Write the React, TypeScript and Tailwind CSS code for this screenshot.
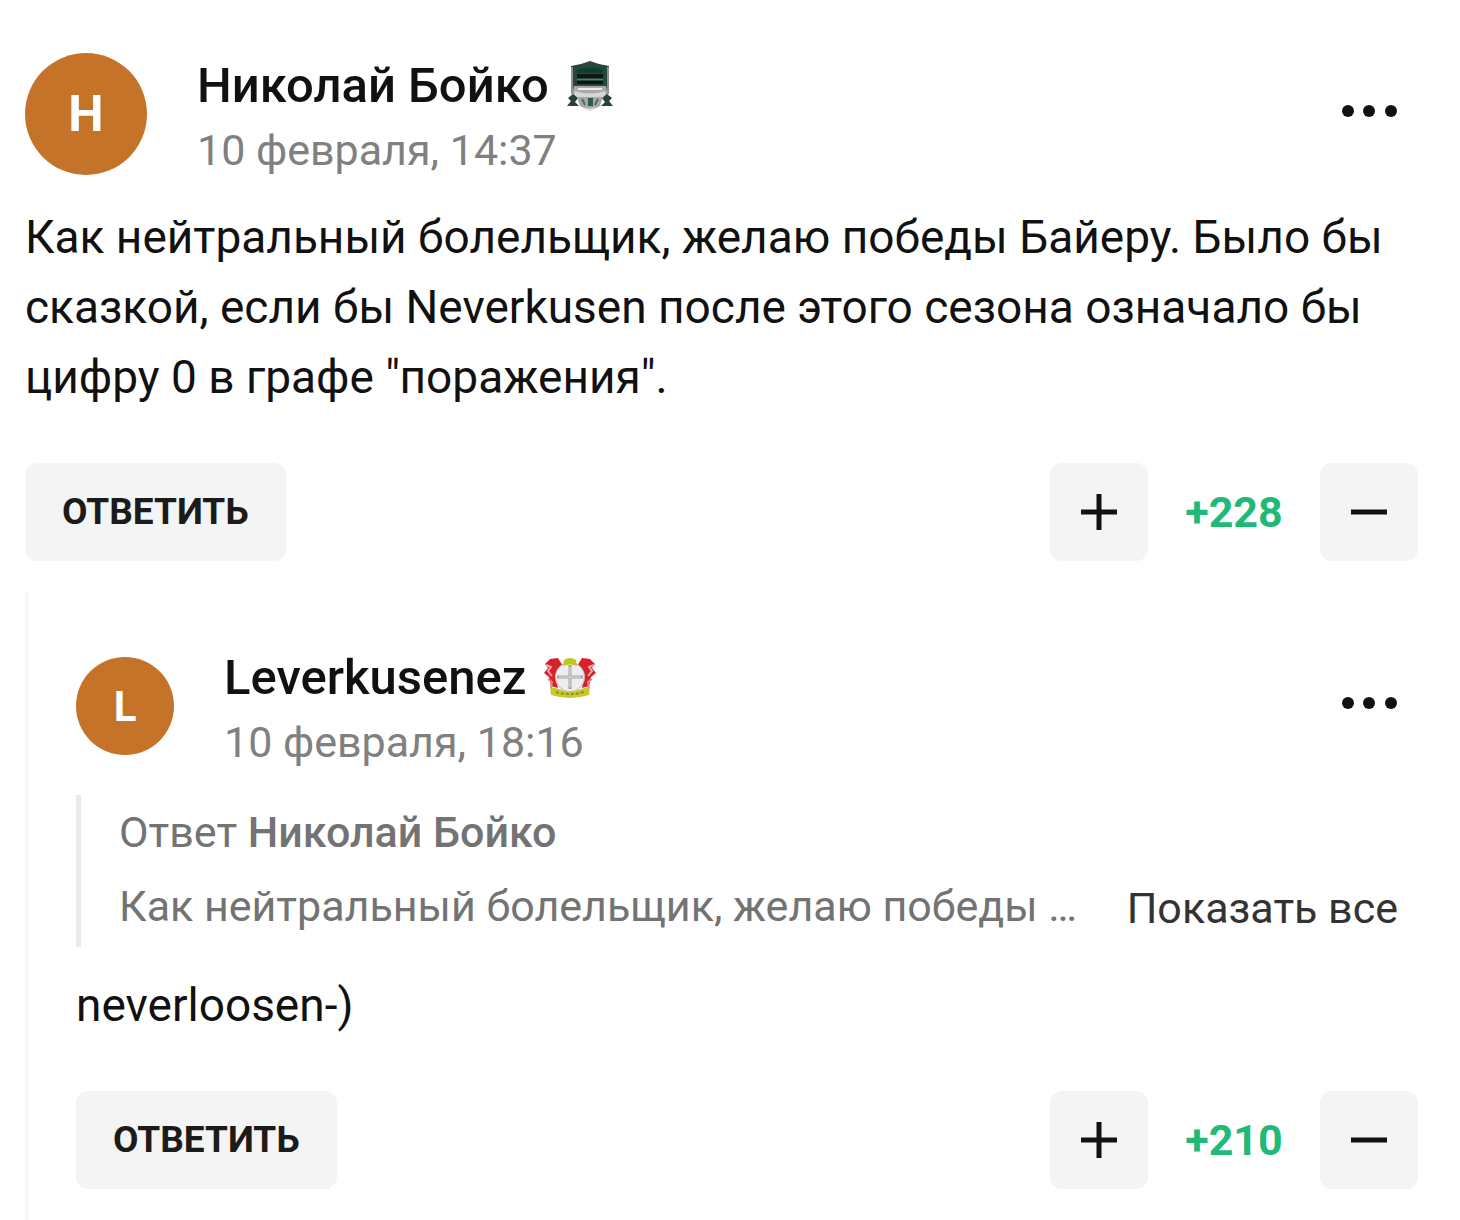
import { ReactNode } from 'react';

type Quote = {
  author: string;
  text: string;
};

type CommentData = {
  id: number;
  author: string;
  initial: string;
  badge: ReactNode;
  date: string;
  text: string;
  rating: number;
  quote?: Quote;
};

const KrasnodarBadge = () => (
  <svg viewBox="0 0 48 52" className="h-[52px] w-12" aria-hidden="true">
    <path d="M5 6Q14 5 24 1Q34 5 43 6L42 34H6Z" fill="#24483a" />
    <path d="M6 7V34M42 7V34" stroke="#8f8f8f" strokeWidth="2" />
    <path d="M11 10Q24 5 37 10V13H11Z" fill="#123d2c" />
    <path d="M11 14H37V18H11Z" fill="#101614" />
    <path d="M11 19H37V20H11Z" fill="#63756c" />
    <path d="M11 21H37V24H11Z" fill="#0d1210" />
    <path d="M8 26H40L42 35L35 40H13L6 35Z" fill="#a9a9a9" />
    <path d="M12 28H36V30H12Z" fill="#ededed" />
    <path d="M9 31Q24 36 39 31L40 36L24 43L8 36Z" fill="#d6d6d6" />
    <path d="M7 34L12 38L9 42L13 46H1L5 41L2 38Z" fill="#294238" />
    <path d="M41 34L36 38L39 42L35 46H47L43 41L46 38Z" fill="#294238" />
    <path d="M11 37H37L34 46L24 51L14 46Z" fill="#a4aaa7" />
    <path d="M22 38H27V46H22Z" fill="#31594b" />
    <path d="M16 39L19 45M32 39L29 45" stroke="#5c6863" strokeWidth="2" />
    <path d="M18 47L24 49L30 47L24 51Z" fill="#eeeeee" />
  </svg>
);

const BayerBadge = () => (
  <svg viewBox="0 0 54 42" className="h-[42px] w-[54px]" aria-hidden="true">
    <path d="M7 2L15 1L20 9L12 18L15 31L8 29L6 20L1 16L5 11L2 7Z" fill="#d9202b" />
    <path d="M47 2L39 1L34 9L42 18L39 31L46 29L48 20L53 16L49 11L52 7Z" fill="#d9202b" />
    <path d="M3 8L8 10L5 14L9 19M51 8L46 10L49 14L45 19" stroke="#e9aaa9" strokeWidth="2" fill="none" />
    <path d="M5 22L9 25L8 31M49 22L45 25L46 31" stroke="#dd8887" strokeWidth="2" fill="none" />
    <circle cx="27" cy="20" r="15" fill="#b9b9b9" />
    <circle cx="27" cy="20" r="14" fill="#eeeeee" />
    <path d="M27 8V32M14 20H40" stroke="#a4a4a4" strokeWidth="3" />
    <path d="M27 10V30M16 20H38" stroke="#e2e2e2" strokeWidth="1" />
    <path d="M21 3Q27 -1 33 3L34 9Q27 6 20 9Z" fill="#c3c51b" />
    <path d="M7 30Q14 31 19 33Q27 36 35 33Q40 31 47 30L46 38Q27 44 8 38Z" fill="#c8c82f" />
    <path d="M13 35Q27 39 41 35" stroke="#8d8e28" strokeWidth="2" strokeDasharray="3 2" fill="none" />
  </svg>
);

const DotsIcon = () => (
  <svg viewBox="0 0 56 14" className="h-[14px] w-14" fill="#111111" aria-hidden="true">
    <circle cx="6" cy="7" r="6" />
    <circle cx="27" cy="7" r="6" />
    <circle cx="49" cy="7" r="6" />
  </svg>
);

const PlusIcon = () => (
  <svg viewBox="0 0 38 38" className="size-[38px]" stroke="#111111" strokeWidth="5" aria-hidden="true">
    <path d="M1 19H37M19 1V37" />
  </svg>
);

const MinusIcon = () => (
  <svg viewBox="0 0 38 38" className="size-[38px]" stroke="#111111" strokeWidth="5" aria-hidden="true">
    <path d="M1 19H37" />
  </svg>
);

const comment: CommentData = {
  id: 1,
  author: 'Николай Бойко',
  initial: 'Н',
  badge: <KrasnodarBadge />,
  date: '10 февраля, 14:37',
  text: 'Как нейтральный болельщик, желаю победы Байеру. Было бы сказкой, если бы Neverkusen после этого сезона означало бы цифру 0 в графе "поражения".',
  rating: 228,
};

const reply: CommentData = {
  id: 2,
  author: 'Leverkusenez',
  initial: 'L',
  badge: <BayerBadge />,
  date: '10 февраля, 18:16',
  text: 'neverloosen-)',
  rating: 210,
  quote: {
    author: 'Николай Бойко',
    text: 'Как нейтральный болельщик, желаю победы …',
  },
};

function CommentHeader({ data, small }: { data: CommentData; small?: boolean }) {
  return (
    <header className="flex items-center">
      <div
        className={
          small
            ? 'flex size-[98px] shrink-0 items-center justify-center rounded-full bg-[#c57329] text-[42px] font-bold text-white'
            : 'flex size-[122px] shrink-0 items-center justify-center rounded-full bg-[#c57329] text-[50px] font-bold text-white'
        }
      >
        {data.initial}
      </div>
      <div className="ml-[50px] flex-1 pt-2">
        <div className="flex h-16 items-center gap-[17px]">
          <a href="#" className="text-[49px] leading-[64px] font-medium text-[#111111]">
            {data.author}
          </a>
          {data.badge}
        </div>
        <time className="block text-[43px] leading-[64px] text-[#808080]">{data.date}</time>
      </div>
      <button type="button" aria-label="Меню" className="mr-5 mb-1.5 flex h-12 items-center">
        <DotsIcon />
      </button>
    </header>
  );
}

function CommentFooter({ rating }: { rating: number }) {
  return (
    <footer className="flex h-[98px] items-stretch justify-between">
      <button type="button" className="rounded-xl bg-[#f4f4f4] px-[37px] text-[37px] font-bold text-[#1b1b1b]">
        ОТВЕТИТЬ
      </button>
      <div className="flex items-center">
        <button type="button" aria-label="Плюс" className="flex size-[98px] items-center justify-center rounded-xl bg-[#f4f4f4]">
          <PlusIcon />
        </button>
        <span className="w-[172px] text-center text-[43px] font-bold text-[#1fb978]">+{rating}</span>
        <button type="button" aria-label="Минус" className="flex size-[98px] items-center justify-center rounded-xl bg-[#f4f4f4]">
          <MinusIcon />
        </button>
      </div>
    </footer>
  );
}

function QuoteBlock({ quote }: { quote: Quote }) {
  return (
    <blockquote className="border-l-[5px] border-[#ebebeb] pr-5 pb-0.5 pl-[38px] text-[43px] leading-[74px] text-[#737373]">
      <div>
        Ответ <span className="font-medium">{quote.author}</span>
      </div>
      <div className="flex">
        <p className="min-w-0 flex-1 truncate">{quote.text}</p>
        <button type="button" className="ml-10 shrink-0 pt-0.5 leading-[74px] text-[#333333]">
          Показать все
        </button>
      </div>
    </blockquote>
  );
}

export default function App() {
  return (
    <main className="min-h-screen bg-white pt-[46px] pr-[42px] pl-[25px] font-[Roboto,sans-serif]">
      <article>
        <CommentHeader data={comment} />
        <p className="mt-5 mb-[51px] text-[46px] leading-[70px] text-[#111111]">{comment.text}</p>
        <CommentFooter rating={comment.rating} />
      </article>

      <section className="mt-[31px] border-l-4 border-[#f7f7f7] pt-[46px] pb-[31px] pl-[47px]">
        <article>
          <CommentHeader data={reply} small />
          <div className="mt-[21px]">{reply.quote && <QuoteBlock quote={reply.quote} />}</div>
          <p className="mt-[23px] mb-[51px] text-[46px] leading-[70px] text-[#111111]">{reply.text}</p>
          <CommentFooter rating={reply.rating} />
        </article>
      </section>
    </main>
  );
}
